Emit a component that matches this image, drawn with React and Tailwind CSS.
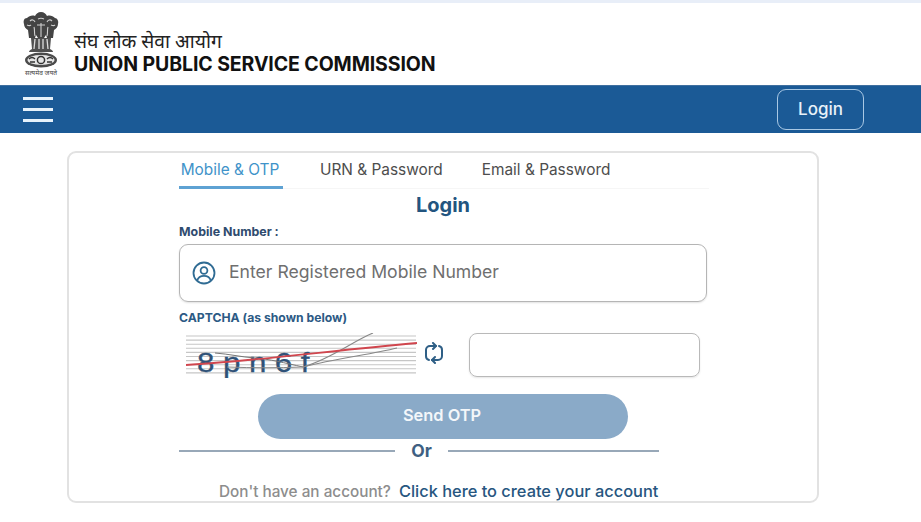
const inter = { fontFamily: 'Inter, "Noto Sans", sans-serif' };

function Emblem() {
  return (
    <svg width="40" height="66" viewBox="0 0 40 66" className="shrink-0">
      {/* lions */}
      <path d="M20 1c-3 0-5 2-6 4-3-1-6 0-8 2-3 0-4 3-3 6 0 3 2 5 4 6l1 8h6l1-3 2 3h6l2-3 1 3h6l1-8c2-1 4-3 4-6 1-3-1-6-3-6-2-2-5-3-8-2-1-2-3-4-6-4z" fill="#444" />
      <path d="M9 10c2-2 4-1 5 1M26 11c1-2 3-3 5-1M17 8c2-1 4-1 6 0M6 14c2 1 3 1 4 0M30 14c2 1 3 1 4 0M13 16c1 3 0 6 1 9M27 16c-1 3 0 6-1 9M20 12v14M16 14h8" stroke="#cfcfcf" strokeWidth="1.100" fill="none" />
      {/* legs */}
      <path d="M10 27h20l-1 11c2 1 3 2 3 3H8c0-1 1-2 3-3z" fill="#505050" />
      <path d="M14 28l-1 10M18 28v10M22 28v10M26 28l1 10" stroke="#dcdcdc" strokeWidth="1.300" />
      {/* abacus with wheel */}
      <ellipse cx="20" cy="49" rx="16" ry="7.500" fill="#4b4b4b" />
      <ellipse cx="20" cy="49" rx="13.500" ry="5" fill="#e4e4e4" />
      <circle cx="20" cy="49" r="3.600" fill="none" stroke="#333" strokeWidth="1.500" />
      <path d="M8 48c2-2 4-2 6 0M26 48c2-2 4-2 6 0M9 51h5M26 51h5" stroke="#333" strokeWidth="1.400" fill="none" />
      <text x="20" y="64" textAnchor="middle" fontSize="6.600" fill="#444" fontFamily='"Noto Sans", "Noto Sans Devanagari", sans-serif'>सत्यमेव जयते</text>
    </svg>
  );
}

function Captcha() {
  return (
    <svg width="234" height="45" viewBox="0 0 234 45" className="shrink-0">
      {[0, 1, 2, 3, 4, 5, 6, 7, 8, 9].map((i) => (
        <line key={i} x1="1" x2="231" y1={3 + i * 4.1} y2={3 + i * 4.1} stroke="#c6c6c6" strokeWidth="1.100" />
      ))}
      <text x="10.700" y="39" transform="scale(1.12 1)" fontSize="28" fill="#2f5278" stroke="#2f5278" strokeWidth="0.300" letterSpacing="7.600" fontFamily='"Liberation Sans", sans-serif'>8pn6f</text>
      <path d="M30 20c14 1 26 4 40 5s30 5 48 9" stroke="#777" strokeWidth="1" fill="none" />
      <path d="M42 34c26 1 50 1 76 0" stroke="#888" strokeWidth="1" fill="none" />
      <path d="M118 34c28-8 50-26 70-34" stroke="#888" strokeWidth="1.100" fill="none" />
      <path d="M118 34c34-9 66-12 94-19" stroke="#888" strokeWidth="1.100" fill="none" />
      <path d="M1 32c70-4 150-15 231-22" stroke="#d0464e" strokeWidth="1.800" fill="none" />
    </svg>
  );
}

export default function App() {
  return (
    <div className="w-[921px] h-[522px] overflow-hidden bg-white" style={inter}>
      <div className="h-[3px] bg-[#e8eef8]" />

      {/* header */}
      <div className="h-[82px] flex items-center pl-[21px] gap-[13px]">
        <Emblem />
        <div className="pt-[16px]">
          <div className="text-[19.300px] leading-[24px] text-[#222]" style={{ fontFamily: '"Noto Sans", "Noto Sans Devanagari", sans-serif' }}>संघ लोक सेवा आयोग</div>
          <div className="text-[19.500px] leading-[22px] font-bold text-[#111] tracking-[-0.1px]">UNION PUBLIC SERVICE COMMISSION</div>
        </div>
      </div>

      {/* nav */}
      <div className="h-[48px] bg-[#1b5a96] border-t border-[#3f6f9f] flex items-center justify-between pl-[23px] pr-[57px]">
        <div className="flex flex-col gap-[8px]">
          <div className="w-[30px] h-[3px] bg-[#e6f2fb]" />
          <div className="w-[30px] h-[3px] bg-[#e6f2fb]" />
          <div className="w-[30px] h-[3px] bg-[#e6f2fb]" />
        </div>
        <div className="w-[87px] h-[41px] rounded-[9px] border border-[#a9c8e4] flex items-center justify-center text-[17px] text-[#e8f1f9] font-medium">Login</div>
      </div>

      {/* card */}
      <div className="mt-[18px] ml-[67px] w-[752px] h-[352px] bg-white rounded-[9px] border-2 border-[#e2e2e2] pl-[110px]">
        <div className="w-[530px]">
          {/* tabs */}
          <div className="h-[36px] flex border-b border-[#f6f6f6] text-[15.400px] text-[#4d4d4d]">
            <div className="w-[104px] h-[36px] border-b-[3px] border-[#5ea2d3] text-[#3f93c9] flex items-center justify-center pr-[2px]">Mobile &amp; OTP</div>
            <div className="ml-[37px] flex items-center h-[36px] pb-[3px]">URN &amp; Password</div>
            <div className="ml-[39px] flex items-center h-[36px] pb-[3px]">Email &amp; Password</div>
          </div>

          <div className="text-center text-[20px] leading-[26px] font-bold text-[#23557f] mt-[3px] -ml-[2px]">Login</div>

          <div className="text-[12.400px] leading-[16px] font-bold text-[#2f4b6e] mt-[6px]">Mobile Number :</div>

          <div className="mt-[4px] w-[528px] h-[58px] rounded-[9px] border border-[#b5b5b5] shadow-[0_1px_2px_rgba(0,0,0,0.12)] flex items-center pl-[12px]">
            <svg width="24" height="24" viewBox="0 0 24 24" fill="none" stroke="#2f6b93" strokeWidth="1.800">
              <circle cx="12" cy="12" r="10.500" />
              <circle cx="12" cy="9.500" r="3.400" />
              <path d="M5.200 19.500c1-3.200 3.600-4.600 6.800-4.600s5.800 1.400 6.800 4.600" />
            </svg>
            <span className="ml-[13px] pb-[2px] text-[17.600px] text-[#6f6f6f]">Enter Registered Mobile Number</span>
          </div>

          <div className="text-[12.200px] leading-[16px] font-bold text-[#2c5a85] mt-[8px]">CAPTCHA (as shown below)</div>

          <div className="flex items-start mt-[7px] ml-[6px]">
            <Captcha />
            {/* refresh */}
            <svg width="22" height="22" viewBox="0 0 22 22" fill="none" stroke="#2f5f86" strokeWidth="2" strokeLinecap="round" strokeLinejoin="round" className="ml-[4px] mt-[9px]">
              <path d="M6 18a4 4 0 0 1-3-4V8a4 4 0 0 1 4-4h6" />
              <path d="M10 1l3 3-3 3" />
              <path d="M16 4a4 4 0 0 1 3 4v6a4 4 0 0 1-4 4H9" />
              <path d="M12 15l-3 3 3 3" />
            </svg>
            <div className="ml-[24px] w-[231px] h-[44px] rounded-[8px] border border-[#b9b9b9] shadow-[0_1px_2px_rgba(0,0,0,0.1)]" />
          </div>

          <div className="mt-[16px] ml-[79px] w-[370px] h-[45px] rounded-full bg-[#8aaac8] flex items-center justify-center text-[16.400px] font-semibold text-[#f4f7fa] pb-[2px] pr-[2px]">Send OTP</div>

          <div className="flex items-center w-[480px] h-[24px]">
            <div className="w-[216px] h-[2px] bg-[#98a8b8]" />
            <div className="w-[53px] text-center text-[17.500px] font-bold text-[#3f5f82]">Or</div>
            <div className="flex-1 h-[2px] bg-[#98a8b8]" />
          </div>

          <div className="mt-[16px] flex items-baseline">
            <span className="ml-[40px] text-[15.300px] font-medium text-[#8d8d8d]">Don&apos;t have an account?</span>
            <span className="ml-[8px] text-[16.400px] font-medium text-[#27567f]">Click here to create your account</span>
          </div>
        </div>
      </div>
    </div>
  );
}
